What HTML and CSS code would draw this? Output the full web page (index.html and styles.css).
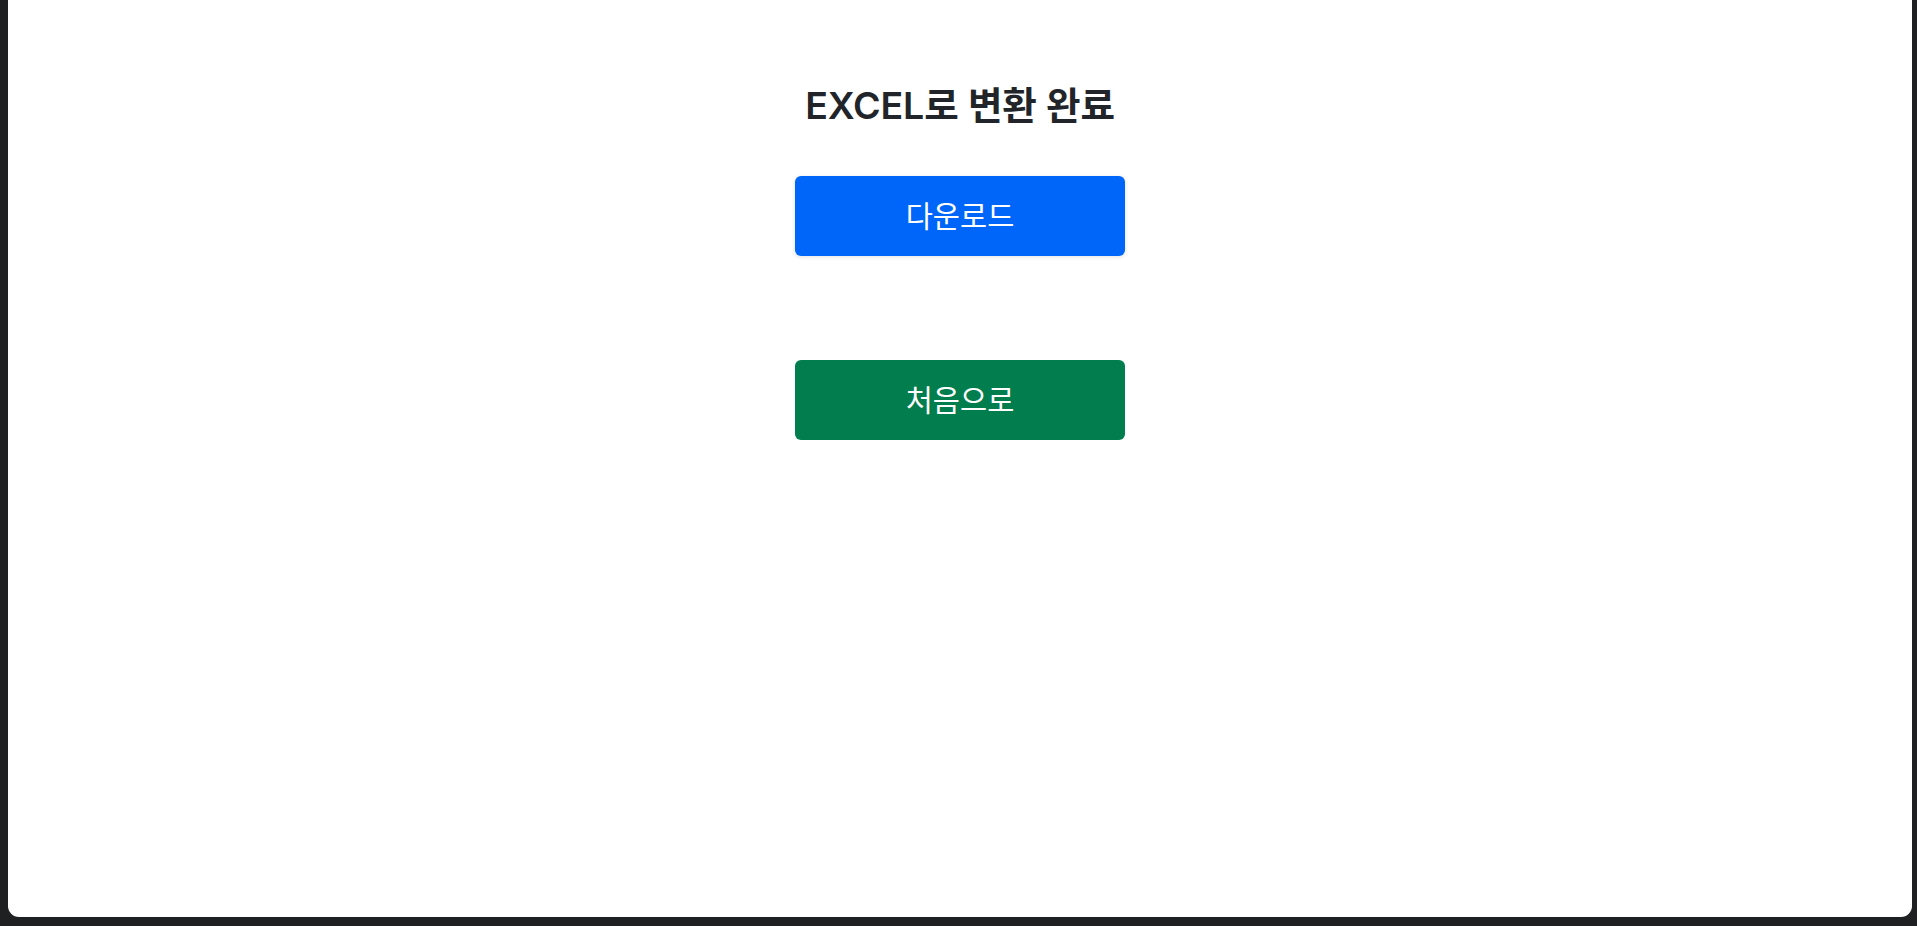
FILE: index.html
```html
<!DOCTYPE html>
<html lang="ko">
<head>
<meta charset="utf-8">
<title>EXCEL로 변환 완료</title>
<link rel="stylesheet" href="styles.css">
</head>
<body>
<div class="window">
  <main class="content">
    <h1 class="title">EXCEL로 변환 완료</h1>
    <div class="actions">
      <button class="btn btn-primary" type="button">다운로드</button>
      <button class="btn btn-success" type="button">처음으로</button>
    </div>
  </main>
</div>
</body>
</html>
```
FILE: styles.css
```css
html, body {
  margin: 0;
  padding: 0;
  height: 100%;
}
body {
  background: #1f2021;
  font-family: Inter, "Noto Sans CJK KR", sans-serif;
  overflow: hidden;
}
.window {
  margin: 0 5px 0 8px;
  height: 917px;
  background: #ffffff;
  border-radius: 0 0 11px 11px;
}
.content {
  display: flex;
  flex-direction: column;
  align-items: center;
  padding-top: 83px;
}
.title {
  margin: 0;
  font-size: 37.5px;
  line-height: 46px;
  font-weight: 600;
  color: #212529;
  letter-spacing: -0.1px;
}
.actions {
  margin-top: 47px;
  display: flex;
  flex-direction: column;
  gap: 104px;
}
.btn {
  width: 330px;
  height: 80px;
  padding: 0;
  border: 0;
  border-radius: 6px;
  color: #ffffff;
  font-family: Inter, "Noto Sans CJK KR", sans-serif;
  font-size: 29.5px;
  line-height: 40px;
  font-weight: 400;
  cursor: pointer;
}
.btn-primary {
  background: #0066fa;
  box-shadow: 0 1px 4px rgba(0, 0, 0, 0.12);
}
.btn-success {
  background: #027d4e;
}
```
